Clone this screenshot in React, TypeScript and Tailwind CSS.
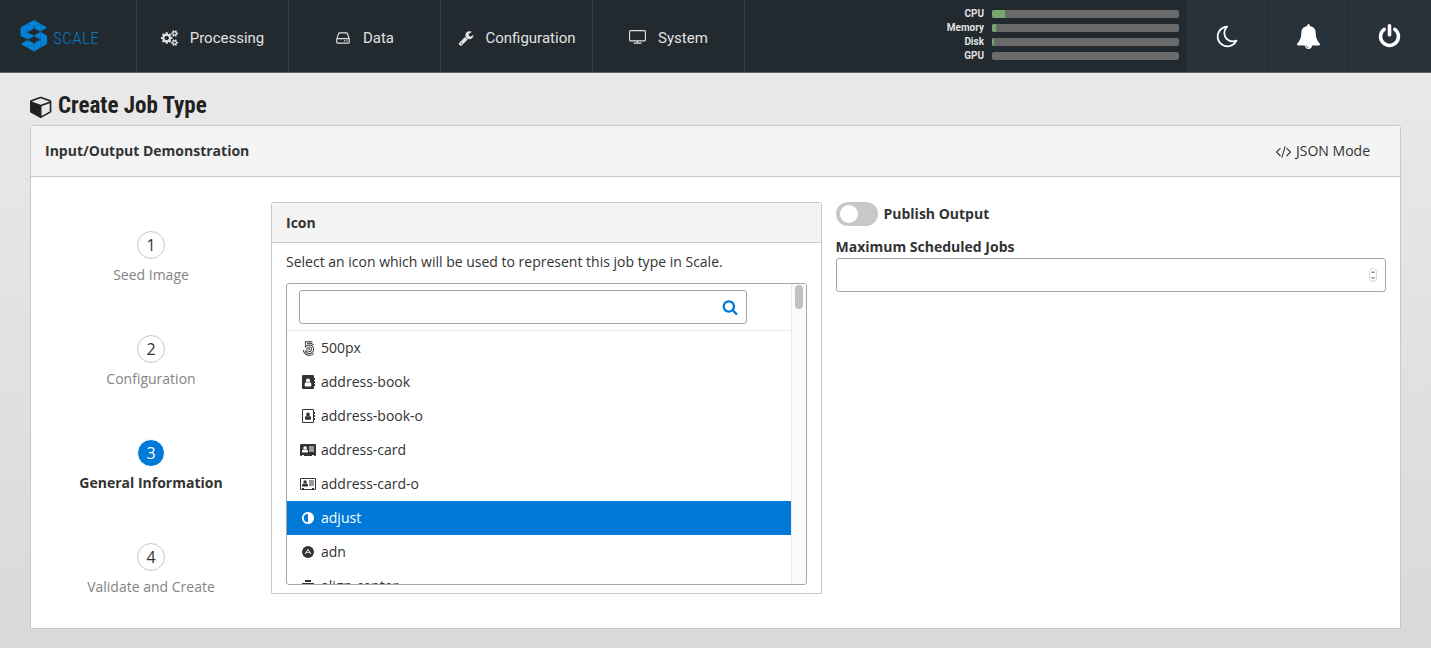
import { useState, type ReactNode } from "react";
import { Fa500Px } from "react-icons/fa";

type IconProps = { d: string; box?: string; className?: string };

function Icon({ d, box = "0 0 1792 1792", className = "" }: IconProps) {
  return (
    <svg viewBox={box} fill="currentColor" fillRule="evenodd" aria-hidden="true" className={`shrink-0 ${className}`}>
      <path d={d} />
    </svg>
  );
}

const paths = {
  cogs: "M896 896q0-106-75-181t-181-75-181 75-75 181 75 181 181 75 181-75 75-181zm768 512q0-52-38-90t-90-38-90 38-38 90q0 53 37.5 90.5t90.5 37.5 90.5-37.5 37.5-90.5zm0-1024q0-52-38-90t-90-38-90 38-38 90q0 53 37.5 90.5t90.5 37.5 90.5-37.5 37.5-90.5zm-384 421v185q0 10-7 19.5t-16 10.5l-155 24q-11 35-32 76 34 48 90 115 7 11 7 20 0 12-7 19-23 30-82.5 89.5t-78.5 59.5q-11 0-21-7l-115-90q-37 19-77 31-11 108-23 155-7 24-30 24h-186q-11 0-20-7.5t-10-17.5l-23-153q-34-10-75-31l-118 89q-7 7-20 7-11 0-21-8-144-133-144-160 0-9 7-19 10-14 41-53t47-61q-23-44-35-82l-152-24q-10-1-17-9.5t-7-19.5v-185q0-10 7-19.5t16-10.5l155-24q11-35 32-76-34-48-90-115-7-11-7-20 0-12 7-20 22-30 82-89t79-59q11 0 21 7l115 90q34-18 77-32 11-108 23-154 7-24 30-24h186q11 0 20 7.5t10 17.5l23 153q34 10 75 31l118-89q8-7 20-7 11 0 21 8 144 133 144 160 0 8-7 19-12 16-42 54t-45 60q23 48 34 82l152 23q10 2 17 10.5t7 19.5zm640 533v140q0 16-149 31-12 27-30 52 51 113 51 138 0 4-4 7-122 71-124 71-8 0-46-47t-52-68q-20 2-30 2t-30-2q-14 21-52 68t-46 47q-2 0-124-71-4-3-4-7 0-25 51-138-18-25-30-52-149-15-149-31v-140q0-16 149-31 13-29 30-52-51-113-51-138 0-4 4-7 4-2 35-20t59-34 30-16q8 0 46 46.5t52 67.5q20-2 30-2t30 2q51-71 92-112l6-2q4 0 124 70 4 3 4 7 0 25-51 138 17 23 30 52 149 15 149 31zm0-1024v140q0 16-149 31-12 27-30 52 51 113 51 138 0 4-4 7-122 71-124 71-8 0-46-47t-52-68q-20 2-30 2t-30-2q-14 21-52 68t-46 47q-2 0-124-71-4-3-4-7 0-25 51-138-18-25-30-52-149-15-149-31v-140q0-16 149-31 13-29 30-52-51-113-51-138 0-4 4-7 4-2 35-20t59-34 30-16q8 0 46 46.5t52 67.5q20-2 30-2t30 2q51-71 92-112l6-2q4 0 124 70 4 3 4 7 0 25-51 138 17 23 30 52 149 15 149 31z",
  disk: "M1168 1216q0 33-23.5 56.5t-56.5 23.5-56.5-23.5-23.5-56.5 23.5-56.5 56.5-23.5 56.5 23.5 23.5 56.5zm256 0q0 33-23.5 56.5t-56.5 23.5-56.5-23.5-23.5-56.5 23.5-56.5 56.5-23.5 56.5 23.5 23.5 56.5zm112 160v-320q0-13-9.5-22.5t-22.5-9.5h-1216q-13 0-22.5 9.5t-9.5 22.5v320q0 13 9.5 22.5t22.5 9.5h1216q13 0 22.5-9.5t9.5-22.5zm-1230-480h1180l-157-482q-4-13-16-21.5t-26-8.5h-782q-14 0-26 8.5t-16 21.5zm1358 160v320q0 66-47 113t-113 47h-1216q-66 0-113-47t-47-113v-320q0-25 16-75l197-606q17-53 63-86t101-33h782q55 0 101 33t63 86l197 606q16 50 16 75z",
  wrench: "M448 1472q0-26-19-45t-45-19-45 19-19 45 19 45 45 19 45-19 19-45zm644-420l-682 682q-37 37-90 37-52 0-91-37l-106-108q-38-36-38-90 0-53 38-91l681-681q39 98 114.5 173.5t173.5 114.5zm634-435q0 39-23 106-47 134-164.5 217.5t-258.5 83.5q-185 0-316.5-131.5t-131.5-316.5 131.5-316.5 316.5-131.5q58 0 121.5 16.5t107.5 46.5q16 11 16 28t-16 28l-293 169v224l193 107q5-3 79-48.5t135.5-81 70.5-35.5q15 0 23.5 10t8.5 25z",
  tv: "M1792 1120v-960q0-13-9.5-22.5t-22.5-9.5h-1600q-13 0-22.5 9.5t-9.5 22.5v960q0 13 9.5 22.5t22.5 9.5h1600q13 0 22.5-9.5t9.5-22.5zm128-960v960q0 66-47 113t-113 47h-736v128h352q14 0 23 9t9 23v64q0 14-9 23t-23 9h-832q-14 0-23-9t-9-23v-64q0-14 9-23t23-9h352v-128h-736q-66 0-113-47t-47-113v-960q0-66 47-113t113-47h1600q66 0 113 47t47 113z",
  moon: "M1390 1303q-54 9-110 9-182 0-337-90t-245-245-90-337q0-192 104-357-201 60-328.5 229t-127.5 384q0 130 51 248.5t136.5 204 204 136.5 248.5 51q144 0 273.5-61.5t220.5-171.5zm203-85q-94 203-283.5 324.5t-413.5 121.5q-156 0-298-61t-245-164-164-245-61-298q0-153 57.5-292.5t156-241.5 235.5-164.5 290-68.5q44-2 61 39 18 41-15 72-86 78-131.5 181.5t-45.5 218.5q0 148 73 273t198 198 273 73q118 0 228-51 41-18 72 13 14 14 17.5 34t-4.5 38z",
  bell: "M912 1696q0-16-16-16-59 0-101.5-42.5t-42.5-101.5q0-16-16-16t-16 16q0 73 51.5 124.5t124.5 51.5q16 0 16-16zm816-288q0 52-38 90t-90 38h-448q0 106-75 181t-181 75-181-75-75-181h-448q-52 0-90-38t-38-90q50-42 91-88t85-119.5 74.5-158.5 50-206 19.5-260q0-152 117-282.5t307-158.5q-8-19-8-39 0-40 28-68t68-28 68 28 28 68q0 20-8 39 190 28 307 158.5t117 282.5q0 139 19.5 260t50 206 74.5 158.5 85 119.5 91 88z",
  power: "M1664 896q0 156-61 298t-164 245-245 164-298 61-298-61-245-164-164-245-61-298q0-182 80.5-343t226.5-270q43-32 95.5-25t83.5 50q32 42 24.5 94.5t-49.5 84.5q-98 74-151.5 181t-53.5 228q0 104 40.5 198.5t109.5 163.5 163.5 109.5 198.5 40.5 198.5-40.5 163.5-109.5 109.5-163.5 40.5-198.5q0-121-53.5-228t-151.5-181q-42-32-49.5-84.5t24.5-94.5q31-43 84-50t95 25q146 109 226.5 270t80.5 343zm-640-768v640q0 52-38 90t-90 38-90-38-38-90v-640q0-52 38-90t90-38 90 38 38 90z",
  search: "M1216 832q0-185-131.5-316.5t-316.5-131.5-316.5 131.5-131.5 316.5 131.5 316.5 316.5 131.5 316.5-131.5 131.5-316.5zm512 832q0 52-38 90t-90 38q-54 0-90-38l-343-342q-179 124-399 124-143 0-273.5-55.5t-225-150-150-225-55.5-273.5 55.5-273.5 150-225 225-150 273.5-55.5 273.5 55.5 225 150 150 225 55.5 273.5q0 220-124 399l343 343q37 37 37 90z",
  cube: "M896 1629l640-349v-636l-640 233v752zm-64-865l698-254-698-254-698 254 698 254zm832-252v768q0 35-18 65t-49 47l-704 384q-28 16-61 16t-61-16l-704-384q-31-17-49-47t-18-65v-768q0-40 23-73t61-47l704-256q22-8 44-8t44 8l704 256q38 14 61 47t23 73z",
  code: "M553 1399l-50 50q-10 10-23 10t-23-10l-466-466q-10-10-10-23t10-23l466-466q10-10 23-10t23 10l50 50q10 10 10 23t-10 23l-393 393 393 393q10 10 10 23t-10 23zm591-1067l-373 1291q-4 13-15.5 19.5t-23.5 2.5l-62-17q-13-4-19.5-15.5t-2.5-24.5l373-1291q4-13 15.5-19.5t23.5-2.5l62 17q13 4 19.5 15.5t2.5 24.5zm657 651l-466 466q-10 10-23 10t-23-10l-50-50q-10-10-10-23t10-23l393-393-393-393q-10-10-10-23t10-23l50-50q10-10 23-10t23 10l466 466q10 10 10 23t-10 23z",
  adjust: "M896 1440v-1088q-148 0-273 73t-198 198-73 273 73 273 198 198 273 73zm768-544q0 209-103 385.5t-279.5 279.5-385.5 103-385.5-103-279.5-279.5-103-385.5 103-385.5 279.5-279.5 385.5-103 385.5 103 279.5 279.5 103 385.5z",
  adn: "M896 128a768 768 0 1 0 0 1536a768 768 0 1 0 0-1536zM896 470l430 680h-130l-106-170h-388l-106 170h-130zM896 662l-134 218h268z",
  book: "M160 0h1216q66 0 113 47t47 113v224h96q32 0 32 32v192q0 32-32 32h-96v128h96q32 0 32 32v192q0 32-32 32h-96v128h96q32 0 32 32v192q0 32-32 32h-96v224q0 66-47 113t-113 47h-1216q-66 0-113-47t-47-113v-1472q0-66 47-113t113-47zM1201 1298c0-200-45-374-220-374q-110 87-213 87t-213-87c-175 0-220 174-220 374q0 170 145 170h576q145 0 145-170zM1030 704a262 262 0 1 0-524 0a262 262 0 1 0 524 0z",
  bookO: "M160 0h1216q66 0 113 47t47 113v224h96q32 0 32 32v192q0 32-32 32h-96v128h96q32 0 32 32v192q0 32-32 32h-96v128h96q32 0 32 32v192q0 32-32 32h-96v224q0 66-47 113t-113 47h-1216q-66 0-113-47t-47-113v-1472q0-66 47-113t113-47zM128 160v1472q0 32 32 32h1216q32 0 32-32v-1472q0-32-32-32h-1216q-32 0-32 32zM1161 1230c0-180-40-334-197-334q-98 78-196 78t-196-78c-157 0-197 154-197 334q0 156 131 156h524q131 0 131-156zM1004 690a236 236 0 1 0-472 0a236 236 0 1 0 472 0z",
  card: "M160 128h1728q160 0 160 160v1216q0 160-160 160h-96v-96q0-32-32-32h-192q-32 0-32 32v96h-1024v-96q0-32-32-32h-192q-32 0-32 32v96h-96q-160 0-160-160v-1216q0-160 160-160zM1024 1112c0-160-36-296-180-296q-90 70-204 70t-204-70c-144 0-180 136-180 296q0 104 100 104h568q100 0 100-104zM872 640a224 224 0 1 0-448 0a224 224 0 1 0 448 0zM1152 448h640v128h-640zM1152 704h640v128h-640zM1152 960h640v128h-640z",
  cardO: "M160 128h1728q160 0 160 160v1216q0 160-160 160h-1728q-160 0-160-160v-1216q0-160 160-160zM128 288v1216q0 32 32 32h96v-96q0-32 32-32h192q32 0 32 32v96h1024v-96q0-32 32-32h192q32 0 32 32v96h96q32 0 32-32v-1216q0-32-32-32h-1728q-32 0-32 32zM1024 1112c0-160-36-296-180-296q-90 70-204 70t-204-70c-144 0-180 136-180 296q0 104 100 104h568q100 0 100-104zM872 640a224 224 0 1 0-448 0a224 224 0 1 0 448 0zM1152 448h640v128h-640zM1152 704h640v128h-640zM1152 960h640v128h-640z",
  alignCenter: "M64 1280h1664q64 0 64 64v128q0 64-64 64h-1664q-64 0-64-64v-128q0-64 64-64zM448 896h896q64 0 64 64v128q0 64-64 64h-896q-64 0-64-64v-128q0-64 64-64zM192 512h1408q64 0 64 64v128q0 64-64 64h-1408q-64 0-64-64v-128q0-64 64-64zM576 128h640q64 0 64 64v128q0 64-64 64h-640q-64 0-64-64v-128q0-64 64-64z",
};

function Logo() {
  return (
    <svg viewBox="0 0 28 32" className="h-8 w-7" aria-hidden="true">
      <path
        fill="#0086dc"
        d="M14 0 27 7.5 20.5 11.500 14 8.500 8 12V13L14 15.500 20.500 12 27 15.500V24L14 31.500 1 24 7.500 20 14 23.500 20 20V19.500L14 16 8 19.500 0.500 16V7.500Z"
      />
      <path
        fill="none"
        stroke="#10578c"
        strokeWidth="0.5"
        d="M14 0V8.500M.5 7.500 8 11.500 20.500 3.800M7.300 3.800 20.500 11.500M8 11.500V19.500M.5 16 8 11.500M7.300 3.800V11M20.500 3.800V11M14 15.500 27 24M20.500 12V27.500M27 15.500 14 23.500V31.500M7.500 20V27.500L14 23.500 20.500 27.500"
      />
    </svg>
  );
}

const navItems: { label: string; icon: ReactNode }[] = [
  { label: "Processing", icon: <Icon d={paths.cogs} box="0 0 1920 1792" className="h-4 w-[17px]" /> },
  { label: "Data", icon: <Icon d={paths.disk} className="h-4 w-4" /> },
  { label: "Configuration", icon: <Icon d={paths.wrench} className="h-4 w-4" /> },
  { label: "System", icon: <Icon d={paths.tv} box="0 0 1920 1792" className="h-4 w-[17px]" /> },
];

const meters = [
  { label: "CPU", value: 7 },
  { label: "Memory", value: 2 },
  { label: "Disk", value: 1 },
  { label: "GPU", value: 0 },
];

const actions = [
  { label: "Dark mode", d: paths.moon },
  { label: "Notifications", d: paths.bell },
  { label: "Sign out", d: paths.power },
];

const steps = ["Seed Image", "Configuration", "General Information", "Validate and Create"];

const iconOptions: { name: string; icon: ReactNode }[] = [
  { name: "500px", icon: <Fa500Px className="h-[15px] w-[15px]" /> },
  { name: "address-book", icon: <Icon d={paths.book} box="0 0 1664 1792" className="h-[14px] w-[13px]" /> },
  { name: "address-book-o", icon: <Icon d={paths.bookO} box="0 0 1664 1792" className="h-[14px] w-[13px]" /> },
  { name: "address-card", icon: <Icon d={paths.card} box="0 0 2048 1792" className="h-[14px] w-4" /> },
  { name: "address-card-o", icon: <Icon d={paths.cardO} box="0 0 2048 1792" className="h-[14px] w-4" /> },
  { name: "adjust", icon: <Icon d={paths.adjust} className="h-[14px] w-[14px]" /> },
  { name: "adn", icon: <Icon d={paths.adn} className="h-[14px] w-[14px]" /> },
  { name: "align-center", icon: <Icon d={paths.alignCenter} className="h-[14px] w-[14px]" /> },
];

function Header() {
  return (
    <header className="flex h-[73px] items-stretch border-b border-[#5c656b] bg-[#22292f] font-[Roboto,sans-serif] text-[#e1e1e1]">
      <a href="#home" className="flex w-[137px] items-center gap-[5px] border-r border-[#2b3c4b] pl-5 text-[#0879c4]">
        <Logo />
        <span className="pt-1 font-[Roboto_Condensed,Roboto,sans-serif] text-[17px] font-light tracking-wide">SCALE</span>
      </a>
      <nav className="flex">
        {navItems.map((item) => (
          <a
            key={item.label}
            href={`#${item.label.toLowerCase()}`}
            className="flex w-[152px] items-center justify-center gap-3 border-r border-[#2b3c4b] pt-1 text-[15px]"
          >
            {item.icon}
            {item.label}
          </a>
        ))}
      </nav>
      <dl className="ml-auto flex flex-col justify-center pr-2 pb-[3px] text-[10px] font-bold">
        {meters.map((m) => (
          <div key={m.label} className="flex h-[14px] items-center gap-2">
            <dt className="w-12 text-right">{m.label}</dt>
            <dd className="h-2 w-[187px] overflow-hidden rounded-xs bg-[#6a6a6a]">
              <div className="h-full bg-[#78a76b]" style={{ width: `${m.value}%` }} />
            </dd>
          </div>
        ))}
      </dl>
      <div className="flex bg-[#28323b] pr-px text-white">
        {actions.map((a) => (
          <button
            key={a.label}
            type="button"
            aria-label={a.label}
            className="flex w-[81px] items-center justify-center border-r border-[#222b32] last:border-r-0"
          >
            <Icon d={a.d} className="h-[25px] w-[25px]" />
          </button>
        ))}
      </div>
    </header>
  );
}

function Steps({ current }: { current: number }) {
  return (
    <ol className="flex w-[240px] shrink-0 flex-col gap-[50px] pt-[54px]">
      {steps.map((label, i) => {
        const active = i === current;
        return (
          <li key={label} className="flex h-[54px] flex-col items-center gap-[6px]">
            <span
              className={
                active
                  ? "flex h-7 w-7 items-center justify-center rounded-full border border-white bg-[#007ad9] text-base text-white"
                  : "flex h-7 w-7 items-center justify-center rounded-full border border-[#c8c8c8] text-base"
              }
            >
              {i + 1}
            </span>
            <span className={active ? "font-bold" : "text-[#848484]"}>{label}</span>
          </li>
        );
      })}
    </ol>
  );
}

function IconPicker() {
  const [selected, setSelected] = useState("adjust");
  const [query, setQuery] = useState("");
  return (
    <section className="min-w-0 rounded-t-[3px] border border-[#c8c8c8]">
      <h2 className="flex h-10 items-center border-b border-[#c8c8c8] bg-[#f4f4f4] px-[14px] pt-px font-bold">Icon</h2>
      <div className="px-[14px] pt-[9px] pb-2">
        <p>Select an icon which will be used to represent this job type in Scale.</p>
        <div className="mt-[11px] flex h-[302px] overflow-hidden rounded-[3px] border border-[#a6a6a6]">
          <div className="min-w-0 flex-1">
            <div className="flex h-[47px] items-center border-b border-[#eaeaea] pr-11 pl-3">
              <label className="flex h-[34px] flex-1 items-center rounded-[3px] border border-[#a6a6a6] pr-2">
                <input
                  type="text"
                  aria-label="Filter icons"
                  value={query}
                  onChange={(e) => setQuery(e.target.value)}
                  className="min-w-0 flex-1 px-2 outline-none"
                />
                <Icon d={paths.search} className="h-4 w-4 text-[#007ad9]" />
              </label>
            </div>
            <ul role="listbox" aria-label="Icon">
              {iconOptions
                .filter((o) => o.name.includes(query))
                .map((o) => (
                  <li key={o.name} role="option" aria-selected={o.name === selected}>
                    <button
                      type="button"
                      onClick={() => setSelected(o.name)}
                      className={
                        o.name === selected
                          ? "flex h-[34px] w-full items-center gap-1 bg-[#007ad9] px-3 text-white"
                          : "flex h-[34px] w-full items-center gap-1 px-3"
                      }
                    >
                      <span className="flex w-[18px] justify-center">{o.icon}</span>
                      {o.name}
                    </button>
                  </li>
                ))}
            </ul>
          </div>
          <div className="flex w-[15px] justify-center border-l border-[#e8e8e8] bg-[#fafafa] pt-px">
            <div className="h-6 w-2 rounded-full bg-[#c1c1c1]" />
          </div>
        </div>
      </div>
    </section>
  );
}

function Settings() {
  const [publish, setPublish] = useState(false);
  return (
    <section className="min-w-0">
      <label className="flex h-6 items-center gap-[6px] font-bold">
        <input
          type="checkbox"
          role="switch"
          checked={publish}
          onChange={(e) => setPublish(e.target.checked)}
          className="flex h-6 w-[42px] appearance-none items-center rounded-full bg-[#c8c8c8] px-1 before:h-[18px] before:w-[18px] before:rounded-full before:bg-white checked:justify-end checked:bg-[#007ad9]"
        />
        Publish Output
      </label>
      <label htmlFor="max-jobs" className="mt-[11px] mb-px block font-bold">
        Maximum Scheduled Jobs
      </label>
      <div className="flex h-[34px] items-center rounded-[3px] border border-[#a6a6a6] pr-2">
        <input
          id="max-jobs"
          type="number"
          className="min-w-0 flex-1 appearance-none px-2 outline-none [&::-webkit-inner-spin-button]:appearance-none"
        />
        <svg viewBox="0 0 8 14" className="h-[14px] w-2" aria-hidden="true">
          <rect x="0.5" y="0.5" width="7" height="13" rx="3.500" fill="#fff" stroke="#d4d4d4" />
          <path d="M2.500 5 4 3.500 5.500 5M2.500 9 4 10.500 5.500 9" fill="none" stroke="#444" />
        </svg>
      </div>
    </section>
  );
}

export default function App() {
  return (
    <div className="flex min-h-screen flex-col bg-linear-to-b from-[#ebebeb] to-[#d9d9d9] font-['Open_Sans',sans-serif] text-[14px] leading-5 text-[#333]">
      <Header />
      <main className="px-[30px] pt-[19px] pb-5">
        <h1 className="flex h-7 items-center gap-[5px] font-['Roboto_Condensed',Roboto,sans-serif] text-[23px] font-bold text-[#212121]">
          <Icon d={paths.cube} className="h-[23px] w-[23px]" />
          Create Job Type
        </h1>
        <div className="mt-[5px] rounded-t-[3px] border border-[#c8c8c8] bg-white">
          <div className="flex h-[51px] items-center justify-between border-b border-[#c8c8c8] bg-[#f4f4f4] pr-[30px] pl-[14px]">
            <span className="font-bold">Input/Output Demonstration</span>
            <button type="button" className="flex items-center gap-[5px]">
              <Icon d={paths.code} box="0 0 1792 1792" className="h-[15px] w-[15px]" />
              JSON Mode
            </button>
          </div>
          <div className="flex pr-[14px] pb-[31px]">
            <Steps current={2} />
            <div className="grid flex-1 grid-cols-2 items-start gap-[14px] pt-[25px]">
              <IconPicker />
              <Settings />
            </div>
          </div>
        </div>
      </main>
    </div>
  );
}
